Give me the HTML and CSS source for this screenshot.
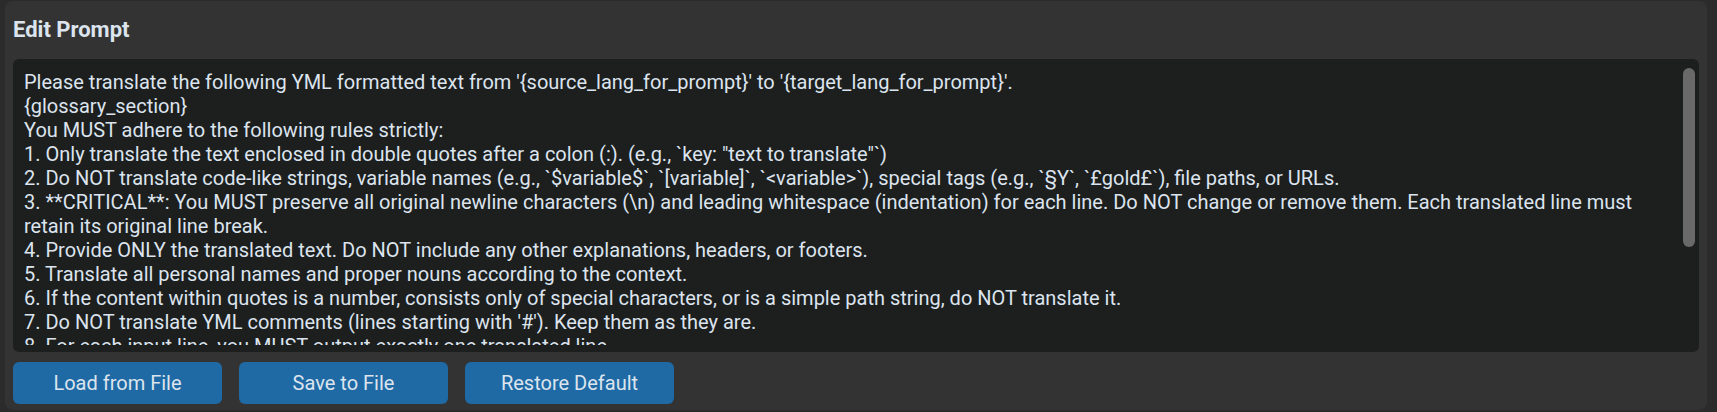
FILE: index.html
```html
<!DOCTYPE html>
<html lang="en">
<head>
<meta charset="utf-8">
<title>Edit Prompt</title>
<link rel="stylesheet" href="styles.css">
</head>
<body>
<div class="panel">
  <div class="title">Edit Prompt</div>
  <div class="textbox">
    <div class="text">Please translate the following YML formatted text from '{source_lang_for_prompt}' to '{target_lang_for_prompt}'.
{glossary_section}
You MUST adhere to the following rules strictly:
1. Only translate the text enclosed in double quotes after a colon (:). (e.g., `key: "text to translate"`)
2. Do NOT translate code-like strings, variable names (e.g., `$variable$`, `[variable]`, `&lt;variable&gt;`), special tags (e.g., `§Y`, `£gold£`), file paths, or URLs.
3. **CRITICAL**: You MUST preserve all original newline characters (\n) and leading whitespace (indentation) for each line. Do NOT change or remove them. Each translated line must
retain its original line break.
4. Provide ONLY the translated text. Do NOT include any other explanations, headers, or footers.
5. Translate all personal names and proper nouns according to the context.
6. If the content within quotes is a number, consists only of special characters, or is a simple path string, do NOT translate it.
7. Do NOT translate YML comments (lines starting with '#'). Keep them as they are.
8. For each input line, you MUST output exactly one translated line.
9. Do NOT merge or split lines.</div>
    <div class="scroll"><div class="thumb"></div></div>
  </div>
  <div class="buttons">
    <button class="btn">Load from File</button>
    <button class="btn">Save to File</button>
    <button class="btn">Restore Default</button>
  </div>
</div>
</body>
</html>
```
FILE: styles.css
```css
html, body {
  margin: 0;
  padding: 0;
  background: #2b2b2b;
  height: 412px;
  overflow: hidden;
}
body {
  font-family: Roboto, "Liberation Sans", sans-serif;
  color: #dce4ee;
}
.panel {
  margin: 1px 10px 0 5px;
  height: 409px;
  box-sizing: border-box;
  background: #333333;
  border-radius: 8px;
  padding: 18px 8px 6px 8px;
  display: flex;
  flex-direction: column;
}
.title {
  font-weight: bold;
  font-size: 22px;
  line-height: 22px;
  height: 22px;
  margin-bottom: 18px;
}
.textbox {
  height: 293px;
  box-sizing: border-box;
  background: #1d1e1e;
  border-radius: 6px;
  display: flex;
  padding: 6px 0 7px 0;
}
.text {
  flex: 1;
  white-space: pre;
  overflow: hidden;
  font-size: 20px;
  line-height: 24px;
  padding: 5px 0 0 11px;
}
.scroll {
  width: 12px;
  padding: 3px 4px 0 0;
}
.thumb {
  height: 179px;
  background: #696969;
  border-radius: 6px;
}
.buttons {
  display: flex;
  gap: 17px;
  margin-top: 10px;
}
.btn {
  width: 209px;
  height: 42px;
  border: none;
  border-radius: 6px;
  background: #1f6aa5;
  color: #dce4ee;
  font-family: Roboto, "Liberation Sans", sans-serif;
  font-size: 20px;
  padding: 0;
}
```
